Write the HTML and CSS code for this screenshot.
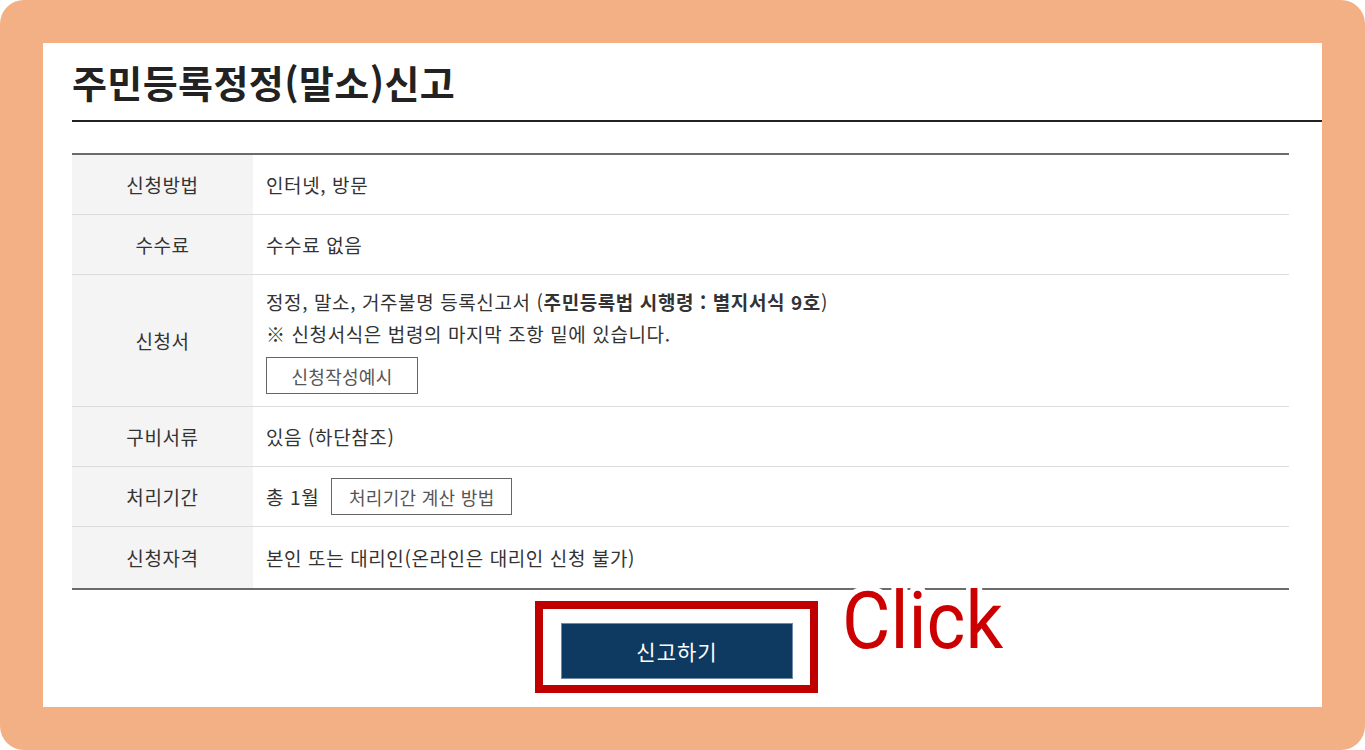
FILE: index.html
```html
<!DOCTYPE html>
<html lang="ko">
<head>
<meta charset="utf-8">
<title>주민등록정정(말소)신고</title>
<link rel="stylesheet" href="styles.css">
</head>
<body>
<div class="frame">
  <div class="sheet">
    <h1 class="title">주민등록정정(말소)신고</h1>
    <div class="info">
      <div class="row">
        <div class="label">신청방법</div>
        <div class="value">인터넷, 방문</div>
      </div>
      <div class="row">
        <div class="label">수수료</div>
        <div class="value">수수료 없음</div>
      </div>
      <div class="row">
        <div class="label">신청서</div>
        <div class="value value-stack">
          <p class="line">정정, 말소, 거주불명 등록신고서 (<b>주민등록법 시행령 : 별지서식 9호</b>)</p>
          <p class="line">※ 신청서식은 법령의 마지막 조항 밑에 있습니다.</p>
          <span class="btn-line btn-example">신청작성예시</span>
        </div>
      </div>
      <div class="row">
        <div class="label">구비서류</div>
        <div class="value">있음 (하단참조)</div>
      </div>
      <div class="row">
        <div class="label">처리기간</div>
        <div class="value">총 1월 <span class="btn-line btn-inline">처리기간 계산 방법</span></div>
      </div>
      <div class="row row-last">
        <div class="label">신청자격</div>
        <div class="value">본인 또는 대리인(온라인은 대리인 신청 불가)</div>
      </div>
    </div>
    <div class="submit-area">
      <div class="submit-wrap">
        <span class="submit-btn">신고하기</span>
        <span class="highlight"></span>
        <span class="click-note">Click</span>
      </div>
    </div>
  </div>
</div>
</body>
</html>
```
FILE: styles.css
```css
* { box-sizing: border-box; }
html, body { margin: 0; padding: 0; background: #ffffff; }
body {
  width: 1365px;
  height: 750px;
  font-family: "Noto Sans CJK KR", "Noto Sans", sans-serif;
  color: #333;
}
.frame {
  width: 1365px;
  height: 750px;
  background: #f3b084;
  border-radius: 24px;
  padding: 43px;
}
.sheet {
  background: #fff;
  height: 664px;
  padding-left: 29px;
  display: flex;
  flex-direction: column;
}
.title {
  margin: 0;
  height: 79px;
  display: flex;
  align-items: center;
  font-size: 38px;
  font-weight: 700;
  color: #222;
  letter-spacing: 0.4px;
  border-bottom: 2px solid #222;
}
.info {
  margin-top: 31px;
  margin-right: 33px;
  border-top: 2px solid #6b6b6b;
}
.row {
  display: grid;
  grid-template-columns: 181px 1fr;
  border-bottom: 1px solid #dcdcdc;
  min-height: 60px;
}
.row-last { border-bottom: 2px solid #6b6b6b; min-height: 63px; }
.label {
  background: #f4f4f4;
  display: flex;
  align-items: center;
  justify-content: center;
  font-size: 19px;
  letter-spacing: 0.6px;
  color: #333;
}
.value {
  display: flex;
  align-items: center;
  padding: 0 13px;
  font-size: 19px;
  letter-spacing: 0.6px;
  color: #333;
}
.value-stack {
  flex-direction: column;
  align-items: flex-start;
  padding-top: 11px;
  padding-bottom: 12px;
}
.line { margin: 0; line-height: 32px; }
.line b { font-weight: 700; }
.btn-line {
  display: inline-flex;
  align-items: center;
  justify-content: center;
  height: 37px;
  border: 1px solid #666;
  background: #fff;
  color: #555;
  font-size: 18px;
  letter-spacing: 0.3px;
}
.btn-example { width: 152px; margin-top: 7px; }
.btn-inline { width: 181px; margin-left: 12px; }
.submit-area {
  margin-right: 33px;
  display: flex;
  justify-content: center;
  padding-top: 33px;
  padding-right: 7px;
}
.submit-wrap { position: relative; }
.submit-btn {
  display: flex;
  align-items: center;
  justify-content: center;
  width: 232px;
  height: 56px;
  background: #0e3961;
  border: 1px solid #6f8aa6;
  color: #fff;
  font-size: 21px;
  letter-spacing: 1px;
}
.highlight {
  position: absolute;
  top: -22px;
  left: -26px;
  right: -25px;
  bottom: -14px;
  border: 8px solid #c00000;
}
.click-note {
  position: absolute;
  left: 281px;
  top: -42px;
  font-family: Roboto, "Liberation Sans", sans-serif;
  font-size: 80px;
  line-height: 1;
  color: #cc0000;
  transform: scaleX(0.93);
  transform-origin: left top;
  white-space: nowrap;
  text-shadow: 0 -5px 0 #fff, 4px -4px 0 #fff, -4px -4px 0 #fff, 5px 0 0 #fff, -5px 0 0 #fff;
}
```
